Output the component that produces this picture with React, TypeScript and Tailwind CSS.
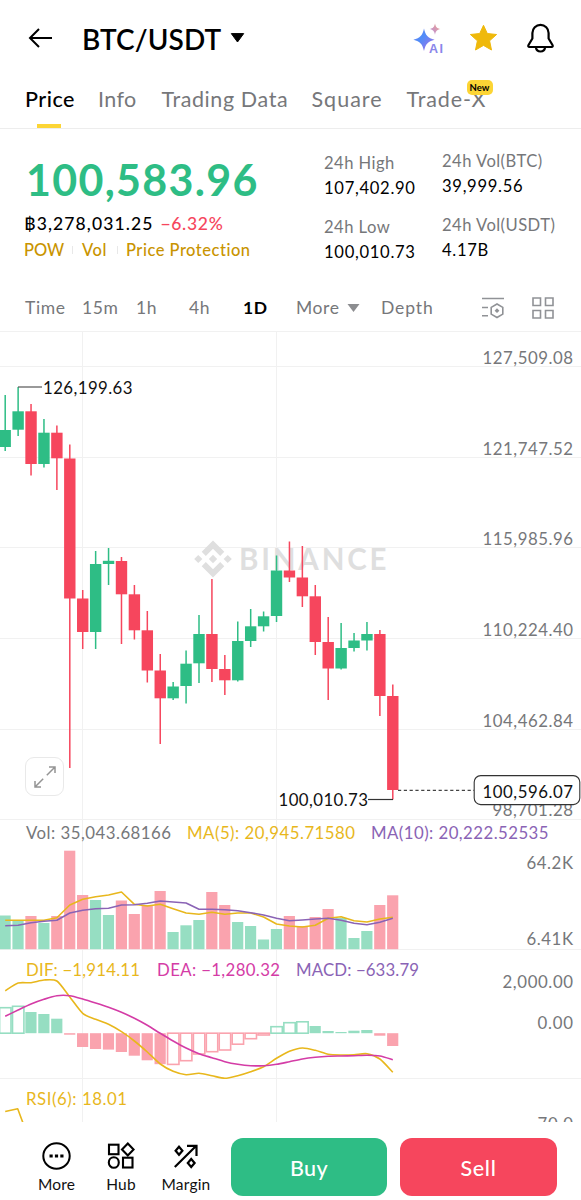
import React from "react";

type Candle = [up: 0 | 1, top: number, bottom: number, high: number, low: number];

const GREEN = "#2ebd85";
const RED = "#f6465d";
const SOFT_GREEN = "#96dec2";
const SOFT_RED = "#faa3ae";
const GOLD = "#e8b71c";
const PURPLE = "#8a63b5";
const PINK = "#d43ca6";
const GRAY = "#76777a";

const cx = (i: number) => 5.2 + 12.92 * i;

const candles: Candle[] = [
  [1, 430, 447, 395, 451],
  [1, 411.3, 429.7, 387, 436],
  [0, 411.3, 464, 404, 475.5],
  [1, 432.7, 464, 419, 467.5],
  [0, 432.7, 458.3, 425.5, 490],
  [0, 458.5, 598.5, 444.5, 768],
  [0, 598.5, 632, 590, 649],
  [1, 564, 632, 551, 649],
  [1, 560.8, 564, 548, 585],
  [0, 561, 594.3, 557, 644],
  [0, 594.3, 630.3, 585, 639.5],
  [0, 630.3, 670.5, 611, 682.5],
  [0, 670.5, 698.3, 654, 744],
  [1, 686.5, 698.3, 682, 700],
  [1, 663.7, 686, 650.5, 703.5],
  [1, 634, 663.3, 615, 683],
  [0, 634, 669, 579, 682],
  [0, 669, 680.3, 655, 695],
  [1, 641, 680.3, 621.5, 681.5],
  [1, 626.3, 641, 609, 647],
  [1, 616.3, 626.3, 611.5, 631.5],
  [1, 570.5, 616, 555.5, 622],
  [0, 570.5, 577.5, 541.5, 582],
  [0, 577.5, 596.3, 546, 607],
  [0, 596.3, 642, 585, 655],
  [0, 642, 668.5, 617, 700],
  [1, 648, 668.5, 623, 669.5],
  [1, 640.5, 648, 633, 651.5],
  [1, 634, 640.5, 622, 650.5],
  [0, 634, 696, 630, 716],
  [0, 696, 790, 684.5, 799.5],
];

const volumeTops = [
  915.5, 920, 916, 923, 916, 850.7, 895, 900, 915, 900.5, 914, 905, 891, 932, 925.3, 920, 892, 905, 922, 926,
  939.5, 929, 916, 926, 917, 909, 918, 938, 931, 905, 895.3,
];

const ma5 = [
  920.3, 920.3, 920.3, 920.3, 917.7, 905, 899.3, 896.7, 895, 892, 904.3, 906, 904.3, 908.7, 913, 914.3, 912.3,
  914.3, 913, 913, 917, 924, 926, 927, 925.3, 918.3, 916.7, 920.7, 922, 919, 917.3,
];

const ma10 = [
  925.7, 925.3, 922.7, 921.3, 920.3, 913, 910.3, 908.7, 908.3, 905, 904.7, 903.3, 901, 902, 903, 909.3, 909.3,
  909.7, 910.7, 912.7, 915, 918.3, 920.8, 920, 919, 918.3, 920.3, 923.3, 924.7, 922.3, 918.3,
];

const macd: [edge: number, hollow: 0 | 1][] = [
  [1007.7, 1], [1006.3, 1], [1012, 0], [1014, 0], [1018.7, 0], [1034.7, 0], [1047, 0], [1049, 0], [1049.6, 0],
  [1052, 0], [1055.7, 0], [1060.3, 0], [1064.2, 0], [1064.4, 1], [1060.7, 1], [1054, 1], [1051.7, 1], [1050, 1],
  [1044.2, 1], [1038.7, 1], [1035, 1], [1026.7, 1], [1022.7, 1], [1021.8, 1], [1026, 0], [1031, 0], [1032, 0],
  [1030.7, 0], [1030, 0], [1035.7, 0], [1046, 0],
];

const dif = [
  990.7, 983, 982.7, 980, 981, 997, 1013.3, 1019.3, 1024.3, 1031.7, 1041, 1052, 1064, 1071.3, 1074.7, 1073.3,
  1075.7, 1078.3, 1075.7, 1071.7, 1066.7, 1058.3, 1051.3, 1048, 1050.3, 1054.3, 1055, 1054.7, 1053.7, 1059,
  1072.3,
];

const dea = [
  1016.3, 1010, 1004, 999.3, 995.7, 995.7, 999, 1003, 1007.3, 1012.3, 1018.3, 1025.3, 1033.3, 1041, 1048, 1053.7,
  1057.7, 1061.7, 1064.3, 1065.7, 1065.7, 1064.3, 1061.7, 1059, 1057.3, 1056.3, 1056, 1055.7, 1055.3, 1056,
  1059.7,
];

const polyline = (values: number[]) => values.map((y, i) => `${cx(i)},${y}`).join(" ");

const smooth = (values: number[]) => {
  const p = values.map((y, i) => [cx(i), y]);
  let d = `M${p[0][0]} ${p[0][1]}`;
  for (let i = 0; i < p.length - 1; i++) {
    const a = p[Math.max(i - 1, 0)];
    const b = p[i];
    const c = p[i + 1];
    const e = p[Math.min(i + 2, p.length - 1)];
    d += `C${b[0] + (c[0] - a[0]) / 8} ${b[1] + (c[1] - a[1]) / 8} ${c[0] - (e[0] - b[0]) / 8} ${
      c[1] - (e[1] - b[1]) / 8
    } ${c[0]} ${c[1]}`;
  }
  return d;
};

type LabelProps = { x1: number; x2: number; y: number; fill?: string; children: string };

function Label({ x1, x2, y, fill = GRAY, children }: LabelProps) {
  return (
    <text x={x1} y={y + 0.5} fill={fill} fontSize="16.8" textLength={x2 - x1} lengthAdjust="spacing">
      {children}
    </text>
  );
}

function Chart() {
  return (
    <svg className="block h-[791px] w-[581px]" viewBox="0 331 581 791">
      <g stroke="#f1f1f1" strokeWidth="1">
        {[331.5, 366.5, 457.5, 547.5, 638.5, 729.5, 819.5, 949.5, 1078.5].map((y) => (
          <line key={y} x1="0" x2="581" y1={y} y2={y} />
        ))}
        {[82.5, 276.5].map((x) => (
          <line key={x} x1={x} x2={x} y1="331" y2="1122" />
        ))}
      </g>

      <g fill="#dfdfdf">
        <path d="M213 540.5 224.3 551.8 220.2 555.9 213 548.7 205.8 555.9 201.7 551.8Z" />
        <path d="M213 577.5 224.3 566.2 220.2 562.1 213 569.3 205.8 562.1 201.7 566.2Z" />
        <path d="M213 554.8 217.2 559 213 563.2 208.8 559Z" />
        <path d="M198.3 554.9 202.4 559 198.3 563.1 194.2 559Z" />
        <path d="M227.7 554.9 231.8 559 227.7 563.1 223.6 559Z" />
        <text x="239" y="569.8" fontSize="29.5" fontWeight="700" textLength="147.5" lengthAdjust="spacing">
          BINANCE
        </text>
      </g>

      {candles.map(([up, top, bottom, high, low], i) => (
        <g key={i} fill={up ? GREEN : RED}>
          <rect x={cx(i) - 0.75} y={high} width="1.5" height={low - high} />
          <rect x={cx(i) - 5.7} y={top} width="11.4" height={bottom - top} />
        </g>
      ))}

      <path d="M18 387H42" stroke="#555" strokeWidth="1.2" />
      <Label x1={43} x2={132.5} y={393.2} fill="#111">126,199.63</Label>
      <path d="M368 799.5H393" stroke="#333" strokeWidth="1.2" />
      <Label x1={278.5} x2={368} y={805.8} fill="#111">100,010.73</Label>
      <path d="M398 790.3H474" stroke="#444" strokeWidth="1.2" strokeDasharray="3.2 2.6" />

      <Label x1={482.5} x2={573} y={363.2}>127,509.08</Label>
      <Label x1={482.5} x2={573} y={454.2}>121,747.52</Label>
      <Label x1={482.5} x2={573} y={544.6}>115,985.96</Label>
      <Label x1={482.5} x2={573} y={635.6}>110,224.40</Label>
      <Label x1={482.5} x2={573} y={726.2}>104,462.84</Label>
      <Label x1={492.5} x2={573} y={815.2}>98,701.28</Label>
      <rect x="474.2" y="775.6" width="105.6" height="29" rx="6.5" fill="#fff" stroke="#333" strokeWidth="1.1" />
      <Label x1={482.5} x2={573} y={797.2} fill="#111">100,596.07</Label>

      <Label x1={26} x2={171} y={838}>Vol: 35,043.68166</Label>
      <Label x1={187} x2={355} y={838} fill={GOLD}>MA(5): 20,945.71580</Label>
      <Label x1={371} x2={548.5} y={838} fill={PURPLE}>MA(10): 20,222.52535</Label>
      <Label x1={526.5} x2={573} y={868.6}>64.2K</Label>
      <Label x1={526.5} x2={573} y={944.6}>6.41K</Label>
      {volumeTops.map((top, i) => (
        <rect
          key={i}
          x={cx(i) - 5.7}
          y={top}
          width="11.2"
          height={949.2 - top}
          fill={candles[i][0] ? SOFT_GREEN : SOFT_RED}
        />
      ))}
      <g fill="none" strokeWidth="1.6" strokeLinejoin="round">
        <polyline points={polyline(ma5)} stroke={GOLD} />
        <polyline points={polyline(ma10)} stroke={PURPLE} />
      </g>

      {macd.map(([edge, hollow], i) => {
        const positive = edge < 1033.3;
        const color = positive ? SOFT_GREEN : SOFT_RED;
        const y = Math.min(edge, 1033.2);
        const height = Math.abs(edge - 1033.2);
        return hollow ? (
          <rect key={i} x={cx(i) - 5.6} y={y} width="11.4" height={height} fill="none" stroke={color} strokeWidth="1.6" />
        ) : (
          <rect key={i} x={cx(i) - 5.7} y={y} width="11.2" height={height} fill={color} />
        );
      })}
      <g fill="none" strokeWidth="1.6" strokeLinejoin="round">
        <path d={smooth(dif)} stroke={GOLD} />
        <path d={smooth(dea)} stroke={PINK} />
        <path d="M5.2 1111.5 17.7 1108.7 23 1123" stroke={GOLD} />
      </g>
      <Label x1={26} x2={140} y={975.2} fill={GOLD}>DIF: −1,914.11</Label>
      <Label x1={157} x2={280} y={975.2} fill={PINK}>DEA: −1,280.32</Label>
      <Label x1={296} x2={419} y={975.2} fill={PURPLE}>MACD: −633.79</Label>
      <Label x1={502.5} x2={573} y={987}>2,000.00</Label>
      <Label x1={537.5} x2={573} y={1028.2}>0.00</Label>
      <Label x1={26} x2={127} y={1104.2} fill={GOLD}>RSI(6): 18.01</Label>
      <Label x1={537.5} x2={573} y={1129}>70.0</Label>
    </svg>
  );
}

function Header() {
  return (
    <header className="flex h-[76px] items-center pl-[28px]">
      <svg className="h-[24px] w-[25px]" viewBox="0 0 25 24" fill="none" stroke="#000" strokeWidth="2">
        <path d="M11 3 2 12l9 9M2 12h22" />
      </svg>
      <h1 className="ml-[29px] w-[148px] pt-[2px] text-[28px] leading-[36px] font-semibold tracking-[0.1px] whitespace-nowrap text-black">
        BTC/USDT
      </h1>
      <svg className="h-[10px] w-[15px]" viewBox="0 0 15 10">
        <path d="M1.3.6h12.4L7.5 9Z" stroke="#000" strokeWidth="1" strokeLinejoin="round" />
      </svg>
      <svg className="ml-[167px] h-[36px] w-[32px] overflow-visible" viewBox="0 -1 32 36">
        <defs>
          <linearGradient id="spark" x1="0" y1="0" x2="1" y2="1">
            <stop offset="0" stopColor="#7a7cf0" />
            <stop offset=".4" stopColor="#4f8df8" />
            <stop offset="1" stopColor="#b06be6" />
          </linearGradient>
          <linearGradient id="twinkle" x1="0" y1="1" x2="1" y2="0">
            <stop offset="0" stopColor="#b58be0" />
            <stop offset="1" stopColor="#f0a58c" />
          </linearGradient>
        </defs>
        <path d="M12 7.5C13.600 14.500 15.800 17 22.600 18.700 15.800 20.400 13.600 23 12 30 10.400 23 8.200 20.400 1.400 18.700 8.200 17 10.400 14.500 12 7.500Z" fill="url(#spark)" />
        <path d="M23 2.500C23.900 6.200 24.800 7.200 28.400 8.100 24.800 9 23.900 10 23 13.700 22.100 10 21.200 9 17.600 8.100 21.200 7.200 22.100 6.200 23 2.500Z" fill="url(#twinkle)" />
        <text
          x="17"
          y="32"
          className="font-['Liberation_Sans',sans-serif]"
          fontSize="12.500"
          fontWeight="700"
          fill="#8a86ea"
          stroke="#fff"
          strokeWidth="1.500"
          paintOrder="stroke"
          textLength="14"
        >
          AI
        </text>
      </svg>
      <svg className="ml-[25px] h-[28px] w-[29px]" viewBox="0 0 29 28">
        <path
          d="M14.500 1.300 18.300 9.500 27.600 10.500 20.600 16.800 22.500 26 14.500 21.400 6.500 26 8.400 16.800 1.400 10.500 10.700 9.500Z"
          fill="#efb90b"
          stroke="#efb90b"
          strokeWidth="1"
          strokeLinejoin="round"
        />
      </svg>
      <svg className="ml-[28px] h-[30px] w-[29px]" viewBox="0 0 29 30" fill="none" stroke="#000" strokeWidth="2.200" strokeLinejoin="round">
        <path d="M6.400 10a8.100 8.100 0 0 1 16.200 0v5.500l4 6.700a1.200 1.200 0 0 1-1 1.800H3.400a1.200 1.200 0 0 1-1-1.800l4-6.700Z" />
        <path d="M9.800 24.200c.4 2.600 2.300 4.300 4.700 4.300s4.300-1.700 4.700-4.300" />
      </svg>
    </header>
  );
}

function Tabs() {
  return (
    <nav className="flex h-[53px] border-b border-[#ededed] pl-[25px] pt-[8px] text-[21.5px] leading-[30px] whitespace-nowrap text-[#76777a]">
      <div className="flex w-[73px] flex-col">
        <span className="font-medium tracking-[0.500px] text-black">Price</span>
        <span className="mt-[10px] ml-[12px] h-[5px] w-[24px] bg-[#fcd535]" />
      </div>
      <span className="w-[63.500px] tracking-[0.400px]">Info</span>
      <span className="w-[150px] tracking-[0.600px]">Trading Data</span>
      <span className="w-[95px] tracking-[1px]">Square</span>
      <div className="relative w-[90px] tracking-[0.900px]">
        Trade-X
        <span className="absolute top-[-4px] left-[60px] flex h-[15px] w-[26px] items-center justify-center rounded-[5px] bg-[#fcd535] text-[9.500px] leading-none font-bold tracking-normal text-black">
          New
        </span>
      </div>
    </nav>
  );
}

function Stat({ label, value }: { label: string; value: string }) {
  return (
    <div className="flex h-[63.500px] flex-col text-[16.600px] leading-[25px] whitespace-nowrap">
      <span className="tracking-[0.450px] text-[#76777a]">{label}</span>
      <span className="tracking-[0.700px] text-black">{value}</span>
    </div>
  );
}

function Summary() {
  return (
    <section className="flex h-[156px] pl-[24px]">
      <div className="w-[300px] pt-[26px] whitespace-nowrap">
        <div className="pl-[2px] text-[43px] leading-[50px] font-bold tracking-[1.300px] text-[#2ebd85]">100,583.96</div>
        <div className="mt-[6px] flex gap-[7px] text-[17.500px] leading-[26px] font-medium tracking-[1.100px]">
          <span className="text-black">฿3,278,031.25</span>
          <span className="tracking-[0.700px] text-[#f6465d]">−6.32%</span>
        </div>
        <div className="flex items-center text-[16.500px] leading-[26px] font-medium text-[#c99400]">
          <span className="w-[48px]">POW</span>
          <span className="h-[8px] w-px bg-[#e8e8e8]" />
          <span className="ml-[9px] w-[35px] tracking-[0.500px]">Vol</span>
          <span className="h-[8px] w-px bg-[#e8e8e8]" />
          <span className="ml-[8px] tracking-[0.500px]">Price Protection</span>
        </div>
      </div>
      <div className="w-[118px] pt-[22px]">
        <Stat label="24h High" value="107,402.90" />
        <Stat label="24h Low" value="100,010.73" />
      </div>
      <div className="pt-[20px]">
        <Stat label="24h Vol(BTC)" value="39,999.56" />
        <Stat label="24h Vol(USDT)" value="4.17B" />
      </div>
    </section>
  );
}

function Intervals() {
  return (
    <div className="flex h-[46px] items-center pl-[25px] text-[17.500px] leading-[26px] tracking-[0.600px] whitespace-nowrap text-[#76777a]">
      <span className="w-[57px]">Time</span>
      <span className="w-[54px]">15m</span>
      <span className="w-[53px]">1h</span>
      <span className="w-[54px]">4h</span>
      <span className="w-[53px] font-bold text-black">1D</span>
      <span className="w-[51px]">More</span>
      <svg className="h-[8px] w-[13px]" viewBox="0 0 13 8">
        <path d="M.5 0h12L6.500 8Z" fill="#8c8d90" />
      </svg>
      <span className="ml-[21px] w-[100px] tracking-[0.900px]">Depth</span>
      <svg className="h-[24px] w-[24px]" viewBox="0 0 24 24" fill="none" stroke="#909296" strokeWidth="1.600">
        <path d="M1 2.500h22M1 11.500h6M1 19.800h6M16 8l5.800 3.400v6.700L16 21.500l-5.800-3.400v-6.700Z" />
        <path d="m16 12.300 2.400 2.400-2.400 2.400-2.400-2.400Z" fill="#909296" stroke="none" />
      </svg>
      <svg className="ml-[27px] h-[22px] w-[22px]" viewBox="0 0 22 22" fill="none" stroke="#909296" strokeWidth="1.600">
        <path d="M1 1h7.500v7.500H1ZM13.500 1H21v7.500h-7.500ZM1 13.500h7.500V21H1ZM13.500 13.500H21V21h-7.500Z" />
      </svg>
    </div>
  );
}

function Footer() {
  return (
    <footer className="flex h-[78px] pt-[16px] pl-[24px] text-[15.500px] leading-[20px] text-[#111]">
      <div className="flex w-[65px] flex-col items-center">
        <svg className="mt-[4px] h-[28px] w-[30px]" viewBox="0 0 30 28" fill="none" stroke="#000" strokeWidth="2">
          <ellipse cx="14.500" cy="14" rx="13.200" ry="12.800" />
          <path d="M7.500 14h3.200M12.900 14h3.200M18.300 14h3.200" strokeWidth="3" />
        </svg>
        <span className="mt-[4px] tracking-[0.200px]">More</span>
      </div>
      <div className="flex w-[64px] flex-col items-center">
        <svg className="mt-[4px] h-[28px] w-[28px]" viewBox="0 0 28 28" fill="none" stroke="#000" strokeWidth="2.100">
          <rect x="2" y="2.700" width="9.500" height="9.500" />
          <path d="M20.800 1.500 26.600 7.500 20.800 13.500 15 7.500Z" />
          <ellipse cx="6.800" cy="20.500" rx="5" ry="5.300" />
          <rect x="16" y="15.700" width="9.500" height="9.800" />
        </svg>
        <span className="mt-[4px] tracking-[0.200px]">Hub</span>
      </div>
      <div className="flex w-[66px] flex-col items-center">
        <svg className="mt-[4px] h-[28px] w-[28px]" viewBox="0 0 28 28" fill="none" stroke="#000" strokeWidth="2.200">
          <path d="M2.800 25 24 4M15 3.800h9.500V14" />
          <path d="M7 4.800 10.400 8.800 7 12.800 3.600 8.800ZM19.200 17 22.600 21l-3.400 4-3.400-4Z" />
        </svg>
        <span className="mt-[4px] tracking-[0.200px]">Margin</span>
      </div>
      <button className="ml-[12px] h-[58px] w-[156px] rounded-[12px] bg-[#2ebd85] pt-[2px] text-[21.500px] font-medium tracking-[0.400px] text-white">
        Buy
      </button>
      <button className="ml-[13px] h-[58px] w-[157px] rounded-[12px] bg-[#f6465d] pt-[2px] text-[21.500px] font-medium tracking-[0.700px] text-white">
        Sell
      </button>
    </footer>
  );
}

export default function App() {
  return (
    <main className="flex h-[1200px] w-[581px] flex-col overflow-hidden bg-white font-['Lato','Liberation_Sans',sans-serif]">
      <Header />
      <Tabs />
      <Summary />
      <Intervals />
      <div className="relative h-[791px]">
        <Chart />
        <button className="absolute top-[426px] left-[25px] flex h-[39px] w-[39px] items-center justify-center rounded-[9px] border-[1.500px] border-[#e9e9e9] bg-white">
          <svg className="h-[22px] w-[22px]" viewBox="0 0 22 22" fill="none" stroke="#949494" strokeWidth="1.500">
            <path d="M12.800 9.200 21 1M15 1h6v6M9.200 12.800 1 21M1 15v6h6" />
          </svg>
        </button>
      </div>
      <Footer />
    </main>
  );
}
